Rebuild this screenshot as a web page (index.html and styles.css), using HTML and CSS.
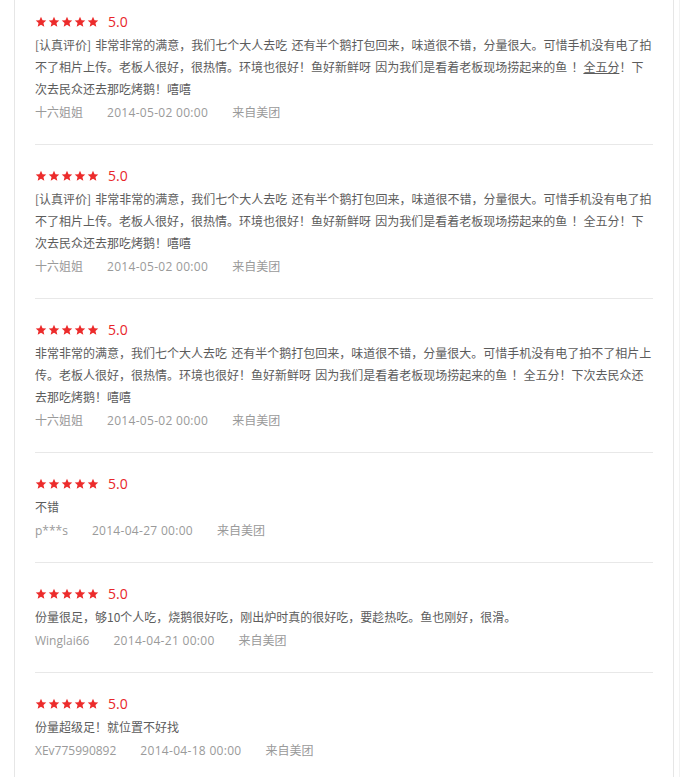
FILE: index.html
```html
<!DOCTYPE html>
<html lang="zh-CN">
<head>
<meta charset="utf-8">
<title>评价</title>
<link rel="stylesheet" href="styles.css">
</head>
<body>
<div class="page">
  <div class="panel">
    <ul class="reviews">
      <li class="review">
        <div class="rating">
          <span class="stars">
            <svg viewBox="0 0 24 24"><path d="M12 1.5l3.1 6.9 7.4.7-5.6 5 1.7 7.4L12 17.6l-6.6 3.9 1.7-7.4-5.6-5 7.4-.7z"/></svg><svg viewBox="0 0 24 24"><path d="M12 1.5l3.1 6.9 7.4.7-5.6 5 1.7 7.4L12 17.6l-6.6 3.9 1.7-7.4-5.6-5 7.4-.7z"/></svg><svg viewBox="0 0 24 24"><path d="M12 1.5l3.1 6.9 7.4.7-5.6 5 1.7 7.4L12 17.6l-6.6 3.9 1.7-7.4-5.6-5 7.4-.7z"/></svg><svg viewBox="0 0 24 24"><path d="M12 1.5l3.1 6.9 7.4.7-5.6 5 1.7 7.4L12 17.6l-6.6 3.9 1.7-7.4-5.6-5 7.4-.7z"/></svg><svg viewBox="0 0 24 24"><path d="M12 1.5l3.1 6.9 7.4.7-5.6 5 1.7 7.4L12 17.6l-6.6 3.9 1.7-7.4-5.6-5 7.4-.7z"/></svg>
          </span>
          <span class="score">5.0</span>
        </div>
        <p class="content">[认真评价] 非常非常的满意，我们七个大人去吃 还有半个鹅打包回来，味道很不错，分量很大。可惜手机没有电了拍不了相片上传。老板人很好，很热情。环境也很好！鱼好新鲜呀 因为我们是看着老板现场捞起来的鱼 ！<span class="ul">全五分</span>！下次去民众还去那吃烤鹅！嘻嘻</p>
        <div class="meta"><span>十六姐姐</span><span class="date">2014-05-02 00:00</span><span>来自美团</span></div>
      </li>
      <li class="review">
        <div class="rating">
          <span class="stars">
            <svg viewBox="0 0 24 24"><path d="M12 1.5l3.1 6.9 7.4.7-5.6 5 1.7 7.4L12 17.6l-6.6 3.9 1.7-7.4-5.6-5 7.4-.7z"/></svg><svg viewBox="0 0 24 24"><path d="M12 1.5l3.1 6.9 7.4.7-5.6 5 1.7 7.4L12 17.6l-6.6 3.9 1.7-7.4-5.6-5 7.4-.7z"/></svg><svg viewBox="0 0 24 24"><path d="M12 1.5l3.1 6.9 7.4.7-5.6 5 1.7 7.4L12 17.6l-6.6 3.9 1.7-7.4-5.6-5 7.4-.7z"/></svg><svg viewBox="0 0 24 24"><path d="M12 1.5l3.1 6.9 7.4.7-5.6 5 1.7 7.4L12 17.6l-6.6 3.9 1.7-7.4-5.6-5 7.4-.7z"/></svg><svg viewBox="0 0 24 24"><path d="M12 1.5l3.1 6.9 7.4.7-5.6 5 1.7 7.4L12 17.6l-6.6 3.9 1.7-7.4-5.6-5 7.4-.7z"/></svg>
          </span>
          <span class="score">5.0</span>
        </div>
        <p class="content">[认真评价] 非常非常的满意，我们七个大人去吃 还有半个鹅打包回来，味道很不错，分量很大。可惜手机没有电了拍不了相片上传。老板人很好，很热情。环境也很好！鱼好新鲜呀 因为我们是看着老板现场捞起来的鱼 ！全五分！下次去民众还去那吃烤鹅！嘻嘻</p>
        <div class="meta"><span>十六姐姐</span><span class="date">2014-05-02 00:00</span><span>来自美团</span></div>
      </li>
      <li class="review">
        <div class="rating">
          <span class="stars">
            <svg viewBox="0 0 24 24"><path d="M12 1.5l3.1 6.9 7.4.7-5.6 5 1.7 7.4L12 17.6l-6.6 3.9 1.7-7.4-5.6-5 7.4-.7z"/></svg><svg viewBox="0 0 24 24"><path d="M12 1.5l3.1 6.9 7.4.7-5.6 5 1.7 7.4L12 17.6l-6.6 3.9 1.7-7.4-5.6-5 7.4-.7z"/></svg><svg viewBox="0 0 24 24"><path d="M12 1.5l3.1 6.9 7.4.7-5.6 5 1.7 7.4L12 17.6l-6.6 3.9 1.7-7.4-5.6-5 7.4-.7z"/></svg><svg viewBox="0 0 24 24"><path d="M12 1.5l3.1 6.9 7.4.7-5.6 5 1.7 7.4L12 17.6l-6.6 3.9 1.7-7.4-5.6-5 7.4-.7z"/></svg><svg viewBox="0 0 24 24"><path d="M12 1.5l3.1 6.9 7.4.7-5.6 5 1.7 7.4L12 17.6l-6.6 3.9 1.7-7.4-5.6-5 7.4-.7z"/></svg>
          </span>
          <span class="score">5.0</span>
        </div>
        <p class="content">非常非常的满意，我们七个大人去吃 还有半个鹅打包回来，味道很不错，分量很大。可惜手机没有电了拍不了相片上传。老板人很好，很热情。环境也很好！鱼好新鲜呀 因为我们是看着老板现场捞起来的鱼 ！全五分！下次去民众还去那吃烤鹅！嘻嘻</p>
        <div class="meta"><span>十六姐姐</span><span class="date">2014-05-02 00:00</span><span>来自美团</span></div>
      </li>
      <li class="review">
        <div class="rating">
          <span class="stars">
            <svg viewBox="0 0 24 24"><path d="M12 1.5l3.1 6.9 7.4.7-5.6 5 1.7 7.4L12 17.6l-6.6 3.9 1.7-7.4-5.6-5 7.4-.7z"/></svg><svg viewBox="0 0 24 24"><path d="M12 1.5l3.1 6.9 7.4.7-5.6 5 1.7 7.4L12 17.6l-6.6 3.9 1.7-7.4-5.6-5 7.4-.7z"/></svg><svg viewBox="0 0 24 24"><path d="M12 1.5l3.1 6.9 7.4.7-5.6 5 1.7 7.4L12 17.6l-6.6 3.9 1.7-7.4-5.6-5 7.4-.7z"/></svg><svg viewBox="0 0 24 24"><path d="M12 1.5l3.1 6.9 7.4.7-5.6 5 1.7 7.4L12 17.6l-6.6 3.9 1.7-7.4-5.6-5 7.4-.7z"/></svg><svg viewBox="0 0 24 24"><path d="M12 1.5l3.1 6.9 7.4.7-5.6 5 1.7 7.4L12 17.6l-6.6 3.9 1.7-7.4-5.6-5 7.4-.7z"/></svg>
          </span>
          <span class="score">5.0</span>
        </div>
        <p class="content">不错</p>
        <div class="meta"><span>p***s</span><span class="date">2014-04-27 00:00</span><span>来自美团</span></div>
      </li>
      <li class="review">
        <div class="rating">
          <span class="stars">
            <svg viewBox="0 0 24 24"><path d="M12 1.5l3.1 6.9 7.4.7-5.6 5 1.7 7.4L12 17.6l-6.6 3.9 1.7-7.4-5.6-5 7.4-.7z"/></svg><svg viewBox="0 0 24 24"><path d="M12 1.5l3.1 6.9 7.4.7-5.6 5 1.7 7.4L12 17.6l-6.6 3.9 1.7-7.4-5.6-5 7.4-.7z"/></svg><svg viewBox="0 0 24 24"><path d="M12 1.5l3.1 6.9 7.4.7-5.6 5 1.7 7.4L12 17.6l-6.6 3.9 1.7-7.4-5.6-5 7.4-.7z"/></svg><svg viewBox="0 0 24 24"><path d="M12 1.5l3.1 6.9 7.4.7-5.6 5 1.7 7.4L12 17.6l-6.6 3.9 1.7-7.4-5.6-5 7.4-.7z"/></svg><svg viewBox="0 0 24 24"><path d="M12 1.5l3.1 6.9 7.4.7-5.6 5 1.7 7.4L12 17.6l-6.6 3.9 1.7-7.4-5.6-5 7.4-.7z"/></svg>
          </span>
          <span class="score">5.0</span>
        </div>
        <p class="content">份量很足，够10个人吃，烧鹅很好吃，刚出炉时真的很好吃，要趁热吃。鱼也刚好，很滑。</p>
        <div class="meta"><span>Winglai66</span><span class="date">2014-04-21 00:00</span><span>来自美团</span></div>
      </li>
      <li class="review">
        <div class="rating">
          <span class="stars">
            <svg viewBox="0 0 24 24"><path d="M12 1.5l3.1 6.9 7.4.7-5.6 5 1.7 7.4L12 17.6l-6.6 3.9 1.7-7.4-5.6-5 7.4-.7z"/></svg><svg viewBox="0 0 24 24"><path d="M12 1.5l3.1 6.9 7.4.7-5.6 5 1.7 7.4L12 17.6l-6.6 3.9 1.7-7.4-5.6-5 7.4-.7z"/></svg><svg viewBox="0 0 24 24"><path d="M12 1.5l3.1 6.9 7.4.7-5.6 5 1.7 7.4L12 17.6l-6.6 3.9 1.7-7.4-5.6-5 7.4-.7z"/></svg><svg viewBox="0 0 24 24"><path d="M12 1.5l3.1 6.9 7.4.7-5.6 5 1.7 7.4L12 17.6l-6.6 3.9 1.7-7.4-5.6-5 7.4-.7z"/></svg><svg viewBox="0 0 24 24"><path d="M12 1.5l3.1 6.9 7.4.7-5.6 5 1.7 7.4L12 17.6l-6.6 3.9 1.7-7.4-5.6-5 7.4-.7z"/></svg>
          </span>
          <span class="score">5.0</span>
        </div>
        <p class="content">份量超级足！就位置不好找</p>
        <div class="meta"><span>XEv775990892</span><span class="date">2014-04-18 00:00</span><span>来自美团</span></div>
      </li>
    </ul>
  </div>
</div>
</body>
</html>
```

FILE: styles.css
```css
html, body {
  margin: 0;
  padding: 0;
  background: #fff;
}

body {
  font-family: "Open Sans", "Noto Sans CJK SC", sans-serif;
  font-size: 12px;
  color: #666;
}

.page {
  width: 679px;
  min-height: 777px;
  border-right: 1px solid #f2f2f2;
}

.panel {
  margin-left: 14px;
  width: 660px;
  min-height: 777px;
  box-sizing: border-box;
  border-left: 1px solid #e6e6e6;
  border-right: 1px solid #e6e6e6;
  padding: 0 20px;
}

.reviews {
  list-style: none;
  margin: 0;
  padding: 0;
}

.review {
  padding: 20px 0 20px;
  border-bottom: 1px solid #e8e8e8;
}

.review:first-child {
  padding-top: 11px;
}

.rating {
  display: flex;
  align-items: center;
  height: 22px;
}

.stars {
  display: flex;
  gap: 1px;
}

.stars svg {
  width: 12px;
  height: 12px;
  fill: #ec2b2b;
  display: block;
}

.score {
  margin-left: 9px;
  font-family: "Liberation Sans Narrow", "Open Sans", sans-serif;
  font-size: 14px;
  color: #e8262a;
  line-height: 22px;
}

.content {
  margin: 1px 0 0;
  line-height: 22px;
  color: #5c5c5c;
  font-family: "Noto Sans CJK SC", sans-serif;
  text-spacing-trim: space-all;
  word-spacing: 1.5px;
}

.content .ul {
  text-decoration: underline;
}

.meta {
  display: flex;
  gap: 24px;
  margin-top: 2px;
  line-height: 22px;
  color: #9a9a9a;
}

.date {
  letter-spacing: 0.3px;
}
```
